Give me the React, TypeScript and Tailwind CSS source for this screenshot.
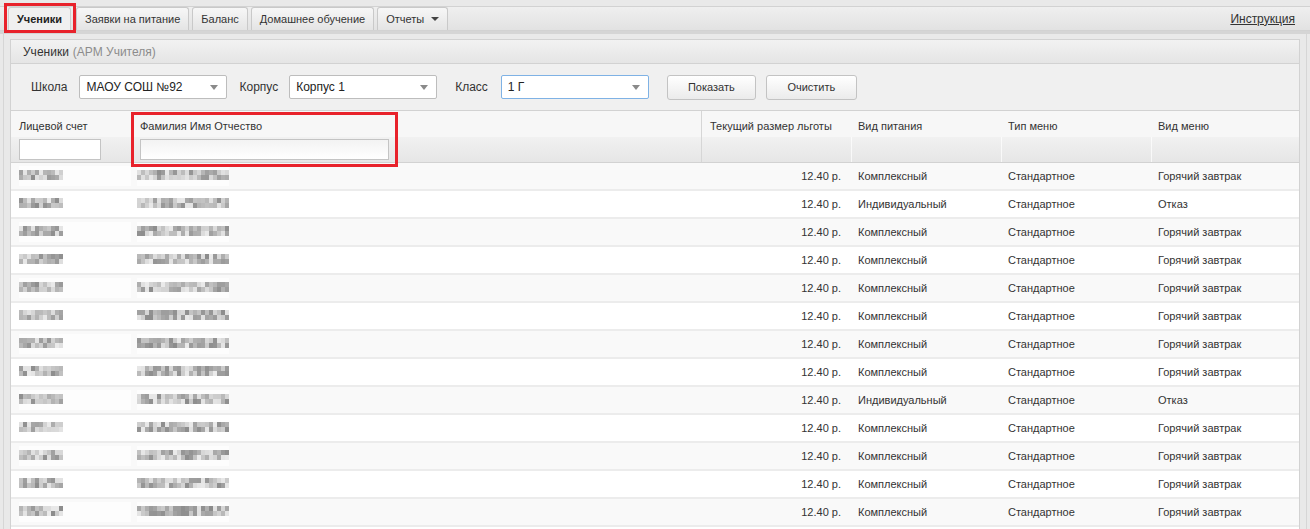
import React from 'react';

const tabs = ['Ученики', 'Заявки на питание', 'Баланс', 'Домашнее обучение', 'Отчеты'];

const rows = [
  ['Комплексный', 'Горячий завтрак'],
  ['Индивидуальный', 'Отказ'],
  ['Комплексный', 'Горячий завтрак'],
  ['Комплексный', 'Горячий завтрак'],
  ['Комплексный', 'Горячий завтрак'],
  ['Комплексный', 'Горячий завтрак'],
  ['Комплексный', 'Горячий завтрак'],
  ['Комплексный', 'Горячий завтрак'],
  ['Индивидуальный', 'Отказ'],
  ['Комплексный', 'Горячий завтрак'],
  ['Комплексный', 'Горячий завтрак'],
  ['Комплексный', 'Горячий завтрак'],
  ['Комплексный', 'Горячий завтрак'],
];

// blurred (pixelated) personal data
const rand = (seed: number) => {
  let s = seed * 9301 + 49297;
  return () => {
    s = (s * 9301 + 49297) % 233280;
    return s / 233280;
  };
};

const Pixels = ({ seed, cols }: { seed: number; cols: number }) => {
  const r = rand(seed);
  const cells: string[] = [];
  for (let i = 0; i < cols * 2; i++) {
    const g = Math.round(140 + r() * 95);
    cells.push(`rgb(${g},${g},${g})`);
  }
  return (
    <div className="flex flex-col pt-[4px] pb-[6px] bg-white/70">
      <div className="grid" style={{ gridTemplateColumns: `repeat(${cols}, 4px)` }}>
        {cells.map((c, i) => (
          <div key={i} className="h-[5px]" style={{ backgroundColor: c }} />
        ))}
      </div>
    </div>
  );
};

const Select = ({ value, focus }: { value: string; focus?: boolean }) => (
  <div
    className={`w-[148px] h-[24px] bg-white border rounded-[2px] flex items-center justify-between pl-[6px] pr-[8px] text-[12px] text-[#222] ${
      focus ? 'border-[#7fb2e5]' : 'border-[#bdbdbd]'
    }`}
  >
    <span>{value}</span>
    <span className="w-0 h-0 border-x-[4px] border-x-transparent border-t-[5px] border-t-[#8a8a8a]" />
  </div>
);

const Button = ({ label, w }: { label: string; w: string }) => (
  <button
    className={`${w} h-[25px] rounded-[3px] border border-[#c3c3c3] bg-gradient-to-b from-white to-[#ebebeb] text-[11px] text-[#333]`}
  >
    {label}
  </button>
);

const App: React.FC = () => {
  return (
    <div
      className="w-[1310px] h-[529px] overflow-hidden bg-[#e9e9e9] text-[#333]"
      style={{ fontFamily: '"Liberation Sans", Arial, sans-serif' }}
    >
      {/* Tabs */}
      <div className="pt-[6px]">
        <div className="relative h-[25px] border-y border-[#d2d2d2] bg-gradient-to-b from-[#efefef] to-[#e2e2e2] flex items-end justify-between pl-[8px] pr-[15px]">
          <div className="flex items-end gap-[3px]">
            {tabs.map((t, i) => (
              <div
                key={t}
                className={`h-[23px] flex items-center gap-[7px] text-[11px] border border-b-0 rounded-t-[3px] ${
                  i === 0
                    ? 'bg-[#f0f0f0] border-[#cfcfcf] font-bold px-[8px] mr-[2px] text-[#222]'
                    : 'bg-gradient-to-b from-[#f7f7f7] to-[#e4e4e4] border-[#c9c9c9] px-[8px]'
                }`}
              >
                {t}
                {i === 4 && (
                  <span className="w-0 h-0 border-x-[4px] border-x-transparent border-t-[4px] border-t-[#444]" />
                )}
              </div>
            ))}
          </div>
          <a className="self-center text-[12px] text-[#333] underline">Инструкция</a>
          <div className="absolute left-[4px] top-[-4px] w-[72px] h-[30px] border-[3px] border-[#e8222b]" />
        </div>
      </div>
      <div className="h-[3px] bg-[#d5d5d5]" />

      {/* Content */}
      <div className="mx-[3px] border-x border-[#d6d6d6] px-[6px] pt-[5px] h-[500px]">
        <div className="bg-white border border-[#d2d2d2] h-full">
          <div className="h-[24px] flex items-center pl-[12px] text-[12px] bg-gradient-to-b from-[#f2f2f2] to-[#e5e5e5] border-b border-[#d2d2d2]">
            <span className="text-[#333]">Ученики</span>
            <span className="ml-[4px] text-[#8c8c8c]">(АРМ Учителя)</span>
          </div>

          {/* Filters */}
          <div className="h-[46px] bg-[#f0f0f0] flex items-center pl-[20px] text-[12px]">
            <span className="mr-[12px]">Школа</span>
            <Select value="МАОУ СОШ №92" />
            <span className="ml-[12px] mr-[11px]">Корпус</span>
            <Select value="Корпус 1" />
            <span className="ml-[18px] mr-[13px]">Класс</span>
            <Select value="1 Г" focus />
            <div className="ml-[18px] flex gap-[10px]">
              <Button label="Показать" w="w-[89px]" />
              <Button label="Очистить" w="w-[91px]" />
            </div>
          </div>

          {/* Table */}
          <div className="text-[11px] relative">
            <div className="border-y border-[#d2d2d2]">
              <div className="flex h-[26px] bg-[#f7f7f7] items-center pt-[4px]">
                <div className="w-[120px] pl-[8px]">Лицевой счет</div>
                <div className="w-[570px] pl-[9px]">Фамилия Имя Отчество</div>
                <div className="w-[150px] pl-[8px] border-l border-[#d6d6d6] self-stretch -mt-[4px] pt-[4px] flex items-center">Текущий размер льготы</div>
                <div className="w-[150px] pl-[7px]">Вид питания</div>
                <div className="w-[150px] pl-[7px]">Тип меню</div>
                <div className="flex-1 pl-[7px]">Вид меню</div>
              </div>
              <div className="flex h-[25px] bg-gradient-to-b from-[#f1f1f1] to-[#e6e6e6] items-center">
                <div className="w-[120px] pl-[8px]">
                  <div className="w-[82px] h-[21px] bg-white border border-[#c4c4c4]" />
                </div>
                <div className="w-[570px] pl-[9px]">
                  <div className="w-[249px] h-[21px] bg-gradient-to-b from-[#f3f3f3] to-white border border-[#c4c4c4]" />
                </div>
                <div className="w-[150px] self-stretch border-l border-[#d6d6d6]" />
                <div className="w-[150px] self-stretch border-l border-white/70" />
                <div className="w-[150px] self-stretch border-l border-white/70" />
                <div className="flex-1 self-stretch border-l border-white/70" />
              </div>
            </div>
            <div className="absolute left-[120px] top-[2px] w-[267px] h-[55px] border-[3px] border-[#e8222b]" />

            {rows.map((row, i) => (
              <div
                key={i}
                className={`flex h-[28px] items-center border-b-2 border-[#ececec] ${
                  i % 2 === 0 ? 'bg-[#f9f9f9]' : 'bg-white'
                }`}
              >
                <div className="w-[120px] pl-[8px]">
                  <Pixels seed={i * 7 + 3} cols={11} />
                </div>
                <div className="w-[570px] pl-[6px]">
                  <div className="w-[92px]">
                    <Pixels seed={i * 13 + 5} cols={23} />
                  </div>
                </div>
                <div className="w-[150px] text-right pr-[10px]">12.40 р.</div>
                <div className="w-[150px] pl-[7px]">{row[0]}</div>
                <div className="w-[150px] pl-[7px]">Стандартное</div>
                <div className="flex-1 pl-[7px]">{row[1]}</div>
              </div>
            ))}
          </div>
        </div>
      </div>
    </div>
  );
};

export default App;
